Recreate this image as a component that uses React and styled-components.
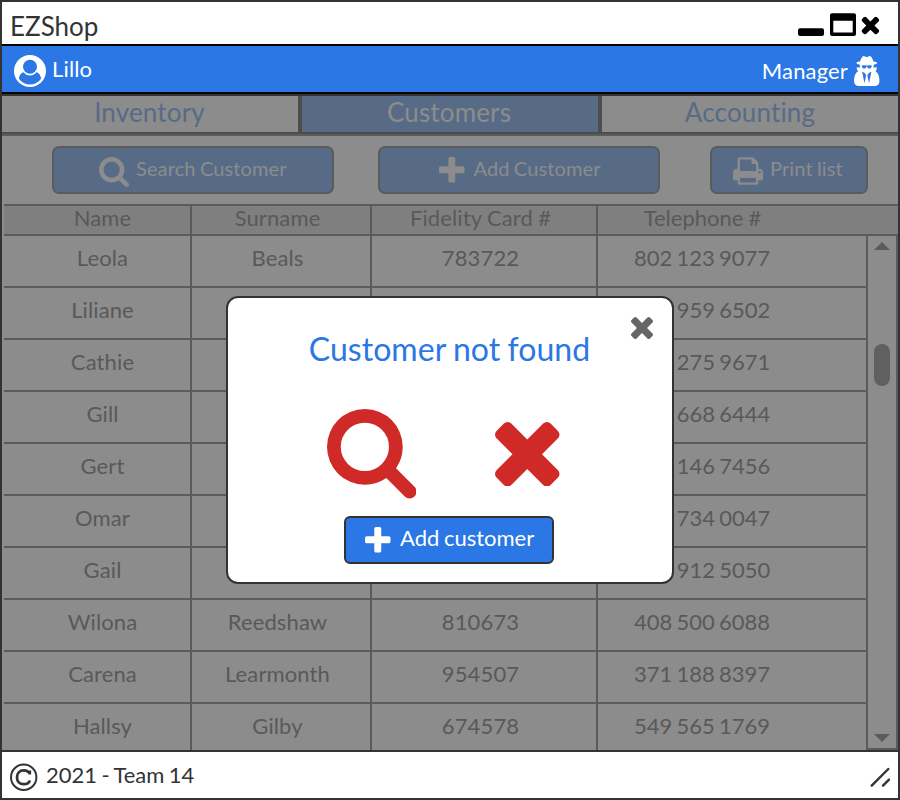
import React from "react";
import styled, { createGlobalStyle } from "styled-components";

const INK = "#333333";
const BLUE = "#2a77e5";
const DIM = "#8c8c8c";
const DIM_INK = "#595959";
const DIM_BLUE = "#576b87";
const DIM_LINE = "#5b5b5b";

const GlobalStyle = createGlobalStyle`
  * { box-sizing: border-box; }
  body { margin: 0; font-family: Lato, sans-serif; color: ${INK}; }
`;

const paths = {
  search:
    "M1216 832q0-185-131.5-316.5t-316.5-131.5-316.5 131.5-131.5 316.5 131.5 316.5 316.5 131.5 316.5-131.5 131.5-316.5zm512 832q0 52-38 90t-90 38q-54 0-90-38l-343-342q-179 124-399 124-143 0-273.5-55.5t-225-150-150-225-55.5-273.5 55.5-273.5 150-225 225-150 273.5-55.5 273.5 55.5 225 150 150 225 55.5 273.5q0 220-124 399l343 343q37 37 37 90z",
  times:
    "M1490 1322q0 40-28 68l-136 136q-28 28-68 28t-68-28l-294-294-294 294q-28 28-68 28t-68-28l-136-136q-28-28-28-68t28-68l294-294-294-294q-28-28-28-68t28-68l136-136q28-28 68-28t68 28l294 294 294-294q28-28 68-28t68 28l136 136q28 28 28 68t-28 68l-294 294 294 294q28 28 28 68z",
  plus:
    "M1600 736v192q0 40-28 68t-68 28h-416v416q0 40-28 68t-68 28h-192q-40 0-68-28t-28-68v-416h-416q-40 0-68-28t-28-68v-192q0-40 28-68t68-28h416v-416q0-40 28-68t68-28h192q40 0 68 28t28 68v416h416q40 0 68 28t28 68z",
  print:
    "M448 1536h896v-256h-896v256zm0-640h896v-384h-160q-40 0-68-28t-28-68v-160h-640v640zm1152 64q0-26-19-45t-45-19-45 19-19 45 19 45 45 19 45-19 19-45zm128 0v416q0 13-9.5 22.5t-22.5 9.5h-224v160q0 40-28 68t-68 28h-960q-40 0-68-28t-28-68v-160h-224q-13 0-22.5-9.5t-9.5-22.5v-416q0-79 56.5-135.5t135.5-56.5h64v-544q0-40 28-68t68-28h672q40 0 88 20t76 48l152 152q28 28 48 76t20 88v256h64q79 0 135.5 56.5t56.5 135.5z",
  secret:
    "M768 1536l96-448-96-128-128-64zm256 0l128-640-128 64-96 128zm160-985q-2-4-4-6-10-8-96-8-70 0-167 19-7 2-21 2t-21-2q-97-19-167-19-86 0-96 8-2 2-4 6 2 18 4 27 2 3 7.5 6.5t7.5 10.5q2 4 7.5 20.5t7 20.5 7.5 17 8.5 17 9 14 12 13.5 14 9.5 17.5 8 20.5 4 24.5 2q36 0 59-12.5t32.5-30 14.5-34.5 11.5-29.5 17.5-12.5h12q11 0 17.5 12.5t11.5 29.5 14.5 34.5 32.5 30 59 12.5q13 0 24.5-2t20.5-4 17.5-8 14-9.5 12-13.5 9-14 8.5-17 7.5-17 7-20.5 7.5-20.5q2-7 7.5-10.5t7.5-6.5q2-9 4-27zm416 879q0 121-73 190t-194 69h-874q-121 0-194-69t-73-190q0-61 4.5-118t19-125.5 37.5-123.5 63.5-103.5 93.5-74.5l-90-220h214q-22-64-22-128 0-12 2-32-194-40-194-96 0-57 210-99 17-62 51.5-134t70.5-114q32-37 76-37 30 0 84 31t84 31 84-31 84-31q44 0 76 37 36 42 70.5 114t51.5 134q210 42 210 99 0 56-194 96 7 81-20 160h214l-82 225q63 33 107.5 96.5t65.5 143.5 29 151.5 8 148.5z",
};

/* Tight bounds of each glyph in font units: x, y, width, height */
const boxes = {
  search: "64 128 1664 1664",
  times: "302 366 1188 1188",
  plus: "192 128 1408 1408",
  print: "64 128 1664 1536",
  secret: "192 25 1408 1664",
};

const Svg = styled.svg`
  display: block;
  flex: none;
  width: ${(p) => p.$w}px;
  height: ${(p) => p.$h}px;
  margin: ${(p) => p.$m || 0};
  fill: currentColor;
`;

const Glyph = ({ name, w, h = w, m }) => (
  <Svg viewBox={boxes[name]} $w={w} $h={h} $m={m}>
    <path d={paths[name]} />
  </Svg>
);

const Window = styled.div`
  position: relative;
  width: 900px;
  height: 800px;
  border: 2px solid ${INK};
  background: #fff;
  display: flex;
  flex-direction: column;
  overflow: hidden;
`;

const TitleBar = styled.header`
  height: 42px;
  display: flex;
  justify-content: space-between;
  padding: 7px 18px 0 8px;
`;

const AppTitle = styled.h1`
  margin: 0;
  font-size: 26px;
  font-weight: 400;
  line-height: 34px;
`;

const Controls = styled.div`
  color: #000;
`;

const UserBar = styled.div`
  height: 50px;
  border-top: 2px solid #000;
  border-bottom: 2px solid #000;
  background: ${BLUE};
  color: #fff;
  display: flex;
  justify-content: space-between;
  padding: 0 18.500px 0 12px;
  font-size: 22px;
  letter-spacing: 0.15px;
`;

const Person = styled.div`
  display: flex;
  align-items: flex-start;
  line-height: 28px;
  gap: ${(p) => p.$gap}px;
  padding-top: ${(p) => p.$top}px;
`;

const Tabs = styled.nav`
  height: 42px;
  display: grid;
  grid-template-columns: 298px 300px 298px;
  border-top: 2px solid ${INK};
  border-bottom: 2px solid ${DIM_LINE};
  background: ${DIM};
`;

const Tab = styled.div`
  border-bottom: 2px solid #4d4d4d;
  border-left: ${(p) => (p.$active ? 2 : 0)}px solid #4d4d4d;
  border-right: ${(p) => (p.$active ? 2 : 0)}px solid #4d4d4d;
  box-shadow: ${(p) => (p.$active ? "-2px 0 #4d4d4d, 2px 0 #4d4d4d" : "none")};
  z-index: ${(p) => (p.$active ? 1 : 0)};
  background: ${(p) => (p.$active ? DIM_BLUE : DIM)};
  color: ${(p) => (p.$active ? DIM : DIM_BLUE)};
  font-size: 26px;
  letter-spacing: 0.16px;
  line-height: 32px;
  text-align: center;
  padding-right: ${(p) => p.$right || 0}px;
  padding-left: ${(p) => p.$left || 0}px;
`;

const Toolbar = styled.div`
  height: 68px;
  background: ${DIM};
  display: flex;
  padding: 10px 30px 0 50px;
  justify-content: space-between;
`;

const ToolButton = styled.button`
  width: ${(p) => p.$w}px;
  height: 48px;
  margin: 0 ${(p) => p.$mr || 0}px 0 0;
  border: 2px solid ${DIM_LINE};
  border-radius: 7px;
  background: ${DIM_BLUE};
  color: ${DIM};
  font: 20px/26px Lato, sans-serif;
  letter-spacing: 0.13px;
  word-spacing: -1px;
  display: flex;
  align-items: flex-start;
  padding: 7px 0 0 ${(p) => p.$pl}px;
  gap: ${(p) => p.$gap}px;
`;

const Columns = styled.div`
  display: grid;
  grid-template-columns: 188px 180px 226px ${(p) => (p.$head ? 300 : 268)}px;
  height: ${(p) => (p.$head ? 32 : 52)}px;
  margin-left: 2px;
  background: ${(p) => (p.$head ? "#7f7f7f" : "transparent")};
  border-top: ${(p) => (p.$head ? 2 : 0)}px solid ${DIM_LINE};
  border-bottom: 2px solid ${DIM_LINE};
`;

const Cell = styled.div`
  border-right: ${(p) => (p.$last ? 0 : 2)}px solid ${DIM_LINE};
  color: ${DIM_INK};
  font-size: 22px;
  letter-spacing: ${(p) => (p.$last ? 0 : 0.12)}px;
  word-spacing: ${(p) => (p.$head ? -0.5 : -1.5)}px;
  line-height: ${(p) => (p.$head ? 24 : 44)}px;
  text-align: center;
  white-space: nowrap;
  padding: 0 ${(p) => p.$right}px 0 ${(p) => p.$left}px;
`;

const TableArea = styled.div`
  height: 546px;
  background: ${DIM};
  overflow: hidden;
`;

const Body = styled.div`
  display: flex;
  height: 514px;
`;

const Rows = styled.div`
  width: 864px;
  overflow: hidden;
`;

const Scrollbar = styled.div`
  width: 32px;
  border-left: 2px solid ${DIM_LINE};
  border-right: 2px solid ${DIM_LINE};
  border-bottom: 2px solid ${DIM_LINE};
  display: flex;
  flex-direction: column;
  align-items: center;
  color: ${DIM_LINE};
  padding-top: 6px;
`;

const Thumb = styled.div`
  width: 16px;
  height: 42px;
  margin: 94px 0 348px;
  border-radius: 8px;
  background: #606060;
`;

const Footer = styled.footer`
  height: 48px;
  border-top: 2px solid ${INK};
  background: #fff;
  display: flex;
  justify-content: space-between;
  padding: 0 8px 0 7px;
  font-size: 22px;
  word-spacing: -1.200px;
  line-height: 46px;
`;

const Copyright = styled.div`
  display: flex;
  gap: 7px;
`;

const Dialog = styled.section`
  position: absolute;
  left: 224px;
  top: 294px;
  width: 448px;
  height: 288px;
  border: 2px solid ${INK};
  border-radius: 12px;
  background: #fff;
  display: flex;
  flex-direction: column;
  align-items: center;
`;

const CloseRow = styled.div`
  align-self: flex-end;
  height: 29px;
  padding: 18.500px 19.500px 0 0;
  color: #666;
`;

const DialogTitle = styled.h2`
  margin: 0 1px 0 0;
  font-size: 32px;
  font-weight: 400;
  letter-spacing: 0.05px;
  word-spacing: -1px;
  line-height: 44px;
  color: ${BLUE};
`;

const Signs = styled.div`
  height: 145px;
  display: flex;
  align-items: flex-start;
  gap: 79px;
  padding: 38px 14px 0 0;
  color: #cf2a27;
`;

const AddButton = styled.button`
  width: 210px;
  height: 48px;
  margin: 0 2px 0 0;
  padding: 6px 0 0 19px;
  border: 2px solid ${INK};
  border-radius: 6px;
  background: ${BLUE};
  color: #fff;
  font: 22px/28px Lato, sans-serif;
  word-spacing: -1px;
  display: flex;
  align-items: flex-start;
  gap: 9.500px;
`;

const insets = [
  { $left: 11, $right: 0 },
  { $left: 0, $right: 7 },
  { $left: 0, $right: 7 },
  { $left: 0, $right: 60 },
];

const customers = [
  ["Leola", "Beals", "783722", "802 123 9077"],
  ["Liliane", "", "", "959 6502"],
  ["Cathie", "", "", "275 9671"],
  ["Gill", "", "", "668 6444"],
  ["Gert", "", "", "146 7456"],
  ["Omar", "Learmouth", "", "734 0047"],
  ["Gail", "", "", "912 5050"],
  ["Wilona", "Reedshaw", "810673", "408 500 6088"],
  ["Carena", "Learmonth", "954507", "371 188 8397"],
  ["Hallsy", "Gilby", "674578", "549 565 1769"],
];

/* Phones without an area code keep their digits aligned with the full ones */
const phoneShift = (value) => (value.length === 8 ? 43 : 0);

const Record = ({ values, head }) => (
  <Columns $head={head}>
    {values.map((value, i) => (
      <Cell
        key={i}
        $head={head}
        $last={i === 3}
        $left={insets[i].$left + (i === 3 && !head ? phoneShift(value) : 0)}
        $right={i === 3 && head ? 91 : insets[i].$right}
      >
        {value}
      </Cell>
    ))}
  </Columns>
);

export default function App() {
  return (
    <>
      <GlobalStyle />
      <Window>
        <TitleBar>
          <AppTitle>EZShop</AppTitle>
          <Controls>
            <Svg viewBox="0 0 82 24" $w={82} $h={24} $m="4px 0 0">
              <rect x="0" y="15.2" width="26" height="7.8" rx="2" />
              <path
                fillRule="evenodd"
                d="M34 .3h22q2 0 2 2v18.700q0 2-2 2h-22q-2 0-2-2v-18.700q0-2 2-2zM35.300 7.800v11.600h19.400v-11.600z"
              />
              <svg x="63.500" y="3.700" width="17.800" height="17.800" viewBox={boxes.times}>
                <path d={paths.times} />
              </svg>
            </Svg>
          </Controls>
        </TitleBar>
        <UserBar>
          <Person $gap={6} $top={9}>
            <Svg viewBox="0 0 32 32" $w={32} $h={32}>
              <circle cx="16" cy="16" r="16" />
              <g fill={BLUE}>
                <circle cx="16" cy="11.800" r="7" />
                <path d="M4.900 23.800C5.300 20.500 6.700 17.800 9.700 17.300Q12.200 20.600 16 20.600T22.300 17.300C25.300 17.800 26.700 20.500 27.100 23.800A13.600 13.600 0 0 1 4.900 23.800z" />
              </g>
            </Svg>
            <span>Lillo</span>
          </Person>
          <Person $gap={6} $top={11}>
            <span>Manager</span>
            <Glyph name="secret" w={25.5} h={30} m="-1px 0 0" />
          </Person>
        </UserBar>
        <Tabs>
          <Tab $right={3}>Inventory</Tab>
          <Tab $active $right={2}>
            Customers
          </Tab>
          <Tab $left={2}>Accounting</Tab>
        </Tabs>
        <Toolbar>
          <ToolButton $w={282} $pl={45} $gap={7}>
            <Glyph name="search" w={30} m="2px 0 0" />
            Search Customer
          </ToolButton>
          <ToolButton $w={282} $pl={59} $gap={9} $mr={6}>
            <Glyph name="plus" w={25.5} m="2px 0 0" />
            Add Customer
          </ToolButton>
          <ToolButton $w={158} $pl={21} $gap={7}>
            <Glyph name="print" w={30} h={28} m="2px 0 0" />
            Print list
          </ToolButton>
        </Toolbar>
        <TableArea>
          <Record head values={["Name", "Surname", "Fidelity Card #", "Telephone #"]} />
          <Body>
            <Rows>
              {customers.map((c) => (
                <Record key={c[0]} values={c} />
              ))}
            </Rows>
            <Scrollbar>
              <Svg viewBox="0 0 16 8" $w={16} $h={8}>
                <path d="M0 8 8 0l8 8z" />
              </Svg>
              <Thumb />
              <Svg viewBox="0 0 16 8" $w={16} $h={8}>
                <path d="M0 0h16L8 8z" />
              </Svg>
            </Scrollbar>
          </Body>
        </TableArea>
        <Footer>
          <Copyright>
            <Svg viewBox="0 0 30 30" $w={30} $h={30} $m="10px 0 0">
              <circle cx="14.700" cy="15.300" r="12.700" fill="none" stroke="currentColor" strokeWidth="2" />
              <path
                d="M20.800 8.500v4M20.800 12C19.500 9.400 17.500 8.400 14.800 8.400C10.500 8.400 8 11.200 8 15.300S10.500 22.200 14.800 22.200C17.800 22.200 20 20.800 21 18.400"
                fill="none"
                stroke="currentColor"
                strokeWidth="2.700"
              />
            </Svg>
            <span>2021 - Team 14</span>
          </Copyright>
          <Svg viewBox="0 0 20 20" $w={20} $h={20} $m="15px 0 0">
            <path
              d="M1.700 18.600 18.300 2M13 18.600l6-6"
              fill="none"
              stroke="currentColor"
              strokeWidth="2.400"
              strokeLinecap="round"
            />
          </Svg>
        </Footer>
        <Dialog>
          <CloseRow>
            <Glyph name="times" w={22} />
          </CloseRow>
          <DialogTitle>Customer not found</DialogTitle>
          <Signs>
            <Glyph name="search" w={89.5} m="0.4px 0 0" />
            <Glyph name="times" w={64.5} m="12.5px 0 0" />
          </Signs>
          <AddButton>
            <Glyph name="plus" w={25.5} m="3px 0 0" />
            Add customer
          </AddButton>
        </Dialog>
      </Window>
    </>
  );
}
